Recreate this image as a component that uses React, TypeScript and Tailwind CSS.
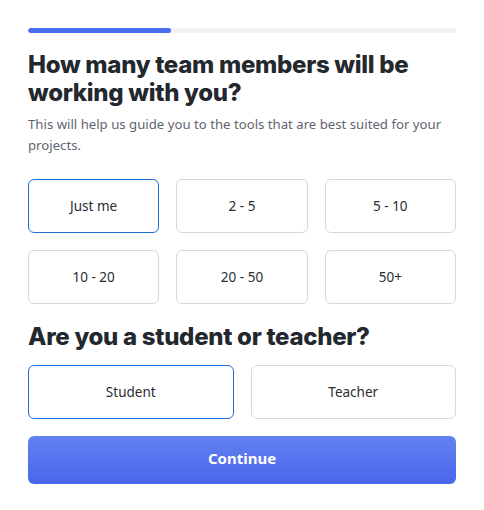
import React, { useState } from 'react';

const teamSizes = ['Just me', '2 - 5', '5 - 10', '10 - 20', '20 - 50', '50+'];
const roles = ['Student', 'Teacher'];

const optionClass = (active: boolean) =>
  `h-[54px] rounded-[6px] border bg-white text-[13.5px] text-[#292c31] flex items-center justify-center ${
    active ? 'border-[#1a6fd8]' : 'border-[#d3d8e0]'
  }`;

export default function App() {
  const [size, setSize] = useState('Just me');
  const [role, setRole] = useState('Student');

  return (
    <div className="w-[484px] h-[510px] bg-white px-[28px] pt-[28px] font-['Noto_Sans',sans-serif]">
      <div className="h-[5px] w-full rounded-full bg-[#f0f1f3] overflow-hidden">
        <div className="h-full w-1/3 bg-[#4a6cf0] rounded-full"></div>
      </div>

      <h1 className="mt-[18px] font-['Inter',sans-serif] text-[24px] leading-[28px] font-extrabold tracking-[-0.012em] text-[#23272e]">
        How many team members will be working with you?
      </h1>
      <p className="mt-[7px] text-[13.2px] leading-[21px] text-[#5f6570]">
        This will help us guide you to the tools that are best suited for your projects.
      </p>

      <div className="mt-[23px] grid grid-cols-3 gap-[17px]">
        {teamSizes.map(s => (
          <button key={s} onClick={() => setSize(s)} className={optionClass(size === s)}>
            {s}
          </button>
        ))}
      </div>

      <h2 className="mt-[19px] font-['Inter',sans-serif] text-[24px] leading-[28px] font-extrabold tracking-[-0.012em] text-[#23272e]">
        Are you a student or teacher?
      </h2>

      <div className="mt-[14px] grid grid-cols-2 gap-[17px]">
        {roles.map(r => (
          <button key={r} onClick={() => setRole(r)} className={optionClass(role === r)}>
            {r}
          </button>
        ))}
      </div>

      <button className="mt-[17px] w-full h-[48px] pb-[3px] rounded-[6px] bg-gradient-to-b from-[#6481f1] to-[#4866ea] text-white text-[15px] font-bold">
        Continue
      </button>
    </div>
  );
}
